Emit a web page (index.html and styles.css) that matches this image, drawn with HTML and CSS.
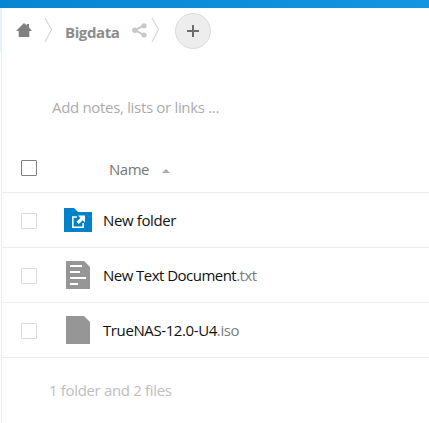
FILE: index.html
```html
<!DOCTYPE html>
<html lang="en">
<head>
<meta charset="utf-8">
<title>Bigdata - Files</title>
<link rel="stylesheet" href="styles.css">
</head>
<body>
<header class="topbar"></header>
<div class="app">
<div class="edge"></div>
<main class="content">
  <nav class="crumbs">
    <svg class="home" width="16" height="14" viewBox="0 0 16 14"><path fill="#808080" d="M8 0 L10.8 2.5 V1 H13 V4.6 L16 8 H13.3 V14 H2.7 V8 H0 Z"/></svg>
    <svg class="sep sep-first" width="9" height="26" viewBox="0 0 9 26"><path d="M1 1 L7.5 12.5 L1 25"/></svg>
    <span class="current">Bigdata</span>
    <svg class="share" width="15" height="15" viewBox="0 0 15 15"><path d="M12 2.5 L3 7 L12 12.2" fill="none" stroke="#c8c8c8" stroke-width="2"/><g fill="#c8c8c8"><circle cx="12" cy="2.8" r="2.6"/><circle cx="2.8" cy="7.3" r="2.7"/><circle cx="12" cy="12" r="2.6"/></g></svg>
    <svg class="sep sep-last" width="9" height="26" viewBox="0 0 9 26"><path d="M1 1 L7.5 12.5 L1 25"/></svg>
    <button class="add" aria-label="New"><svg width="12" height="12" viewBox="0 0 12 12"><path fill="#6c6c6c" d="M5 0h2v5h5v2H7v5H5V7H0V5h5z"/></svg></button>
  </nav>
  <div class="notes"><span>Add notes, lists or links ...</span></div>
  <div class="row head">
    <i class="check dark"></i>
    <span class="heading">Name</span>
    <svg class="sort" width="8" height="4" viewBox="0 0 8 4"><path fill="#aaa" d="M4 0 L8 4 H0z"/></svg>
  </div>
  <div class="row">
    <i class="check"></i>
    <span class="icon"><svg width="28" height="24" viewBox="0 0 28 24"><path fill="#0082c9" d="M0 0H10L14 4H28V24H0z"/><path fill="none" stroke="#fff" stroke-width="1.6" d="M13 9H8.8V19.2H19.2V15"/><path fill="#fff" d="M14 7.5H21V14.5L18.7 12.2L14.8 16.1L12.5 13.8L16.4 9.9z"/></svg></span>
    <span class="name folder">New folder</span>
  </div>
  <div class="row">
    <i class="check"></i>
    <span class="icon"><svg width="24" height="28" viewBox="0 0 24 28"><path fill="#969696" d="M0 0H18L24 6V28H0z"/><path fill="#fff" d="M4 4h12v2H4zM4 10h10v2H4zM4 16h16v2H4zM4 22h8v2H4z"/></svg></span>
    <span class="name text">New Text Document<span class="ext">.txt</span></span>
  </div>
  <div class="row">
    <i class="check"></i>
    <span class="icon"><svg width="24" height="28" viewBox="0 0 24 28"><path fill="#969696" d="M0 0H18L24 6V28H0z"/></svg></span>
    <span class="name iso">TrueNAS-12.0-U4<span class="ext">.iso</span></span>
  </div>
  <footer class="summary"><span>1 folder and 2 files</span></footer>
</main>
</div>
</body>
</html>
```
FILE: styles.css
```css
* { box-sizing: border-box; }
body {
  margin: 0;
  height: 423px;
  overflow: hidden;
  background: #fff;
  font: 15px/20px "Segoe UI", "Open Sans", "Noto Sans", sans-serif;
  color: #111;
  white-space: nowrap;
}
svg { display: block; flex: none; }
.topbar { height: 8px; background: linear-gradient(90deg, #0686d2, #1495e0); }
.app { display: flex; height: 415px; }
.edge { width: 1px; height: 44px; background: #e6f3fa; }
.content { flex: 1; border-left: 1px solid #ededed; }
.crumbs { display: flex; align-items: flex-start; height: 79px; padding: 5px 0 0 14px; }
.home { margin-top: 10px; }
.sep { margin-top: 4px; fill: none; stroke: #d4d4d4; stroke-width: 1.1; }
.sep-first { margin-left: 12px; }
.current { width: 55px; margin: 9px 0 0 12px; font-weight: 700; color: #8c8c8c; letter-spacing: -0.4px; }
.share { margin: 10px 0 0 12px; }
.sep-last { margin-left: 4px; }
.add { display: flex; align-items: center; justify-content: center; width: 36px; height: 36px; margin-left: 15px; padding: 0; border: 1px solid #dbdbdb; border-radius: 50%; background: #ededed; }
.notes { height: 56px; padding: 10px 0 0 50px; color: #ababab; letter-spacing: -0.32px; }
.row { display: flex; align-items: center; height: 55px; padding-left: 19px; border-bottom: 1px solid #ededed; }
.head { height: 50px; }
.check { flex: none; width: 16px; height: 16px; margin-top: 1px; border: 1px solid #dbdbdb; border-radius: 1px; }
.dark { margin-top: 0; border-color: #808080; }
.heading { width: 40px; margin: 2px 0 0 72px; color: #777; letter-spacing: -0.5px; }
.sort { margin: 6px 0 0 13px; }
.icon { display: flex; justify-content: center; width: 28px; margin-left: 27px; }
.name { margin-left: 11px; letter-spacing: -0.37px; }
.text { letter-spacing: -0.53px; }
.iso { letter-spacing: -0.4px; }
.ext { color: #7c7c7c; }
.summary { padding: 22px 0 0 47px; color: #bebebe; letter-spacing: -0.33px; }
```
